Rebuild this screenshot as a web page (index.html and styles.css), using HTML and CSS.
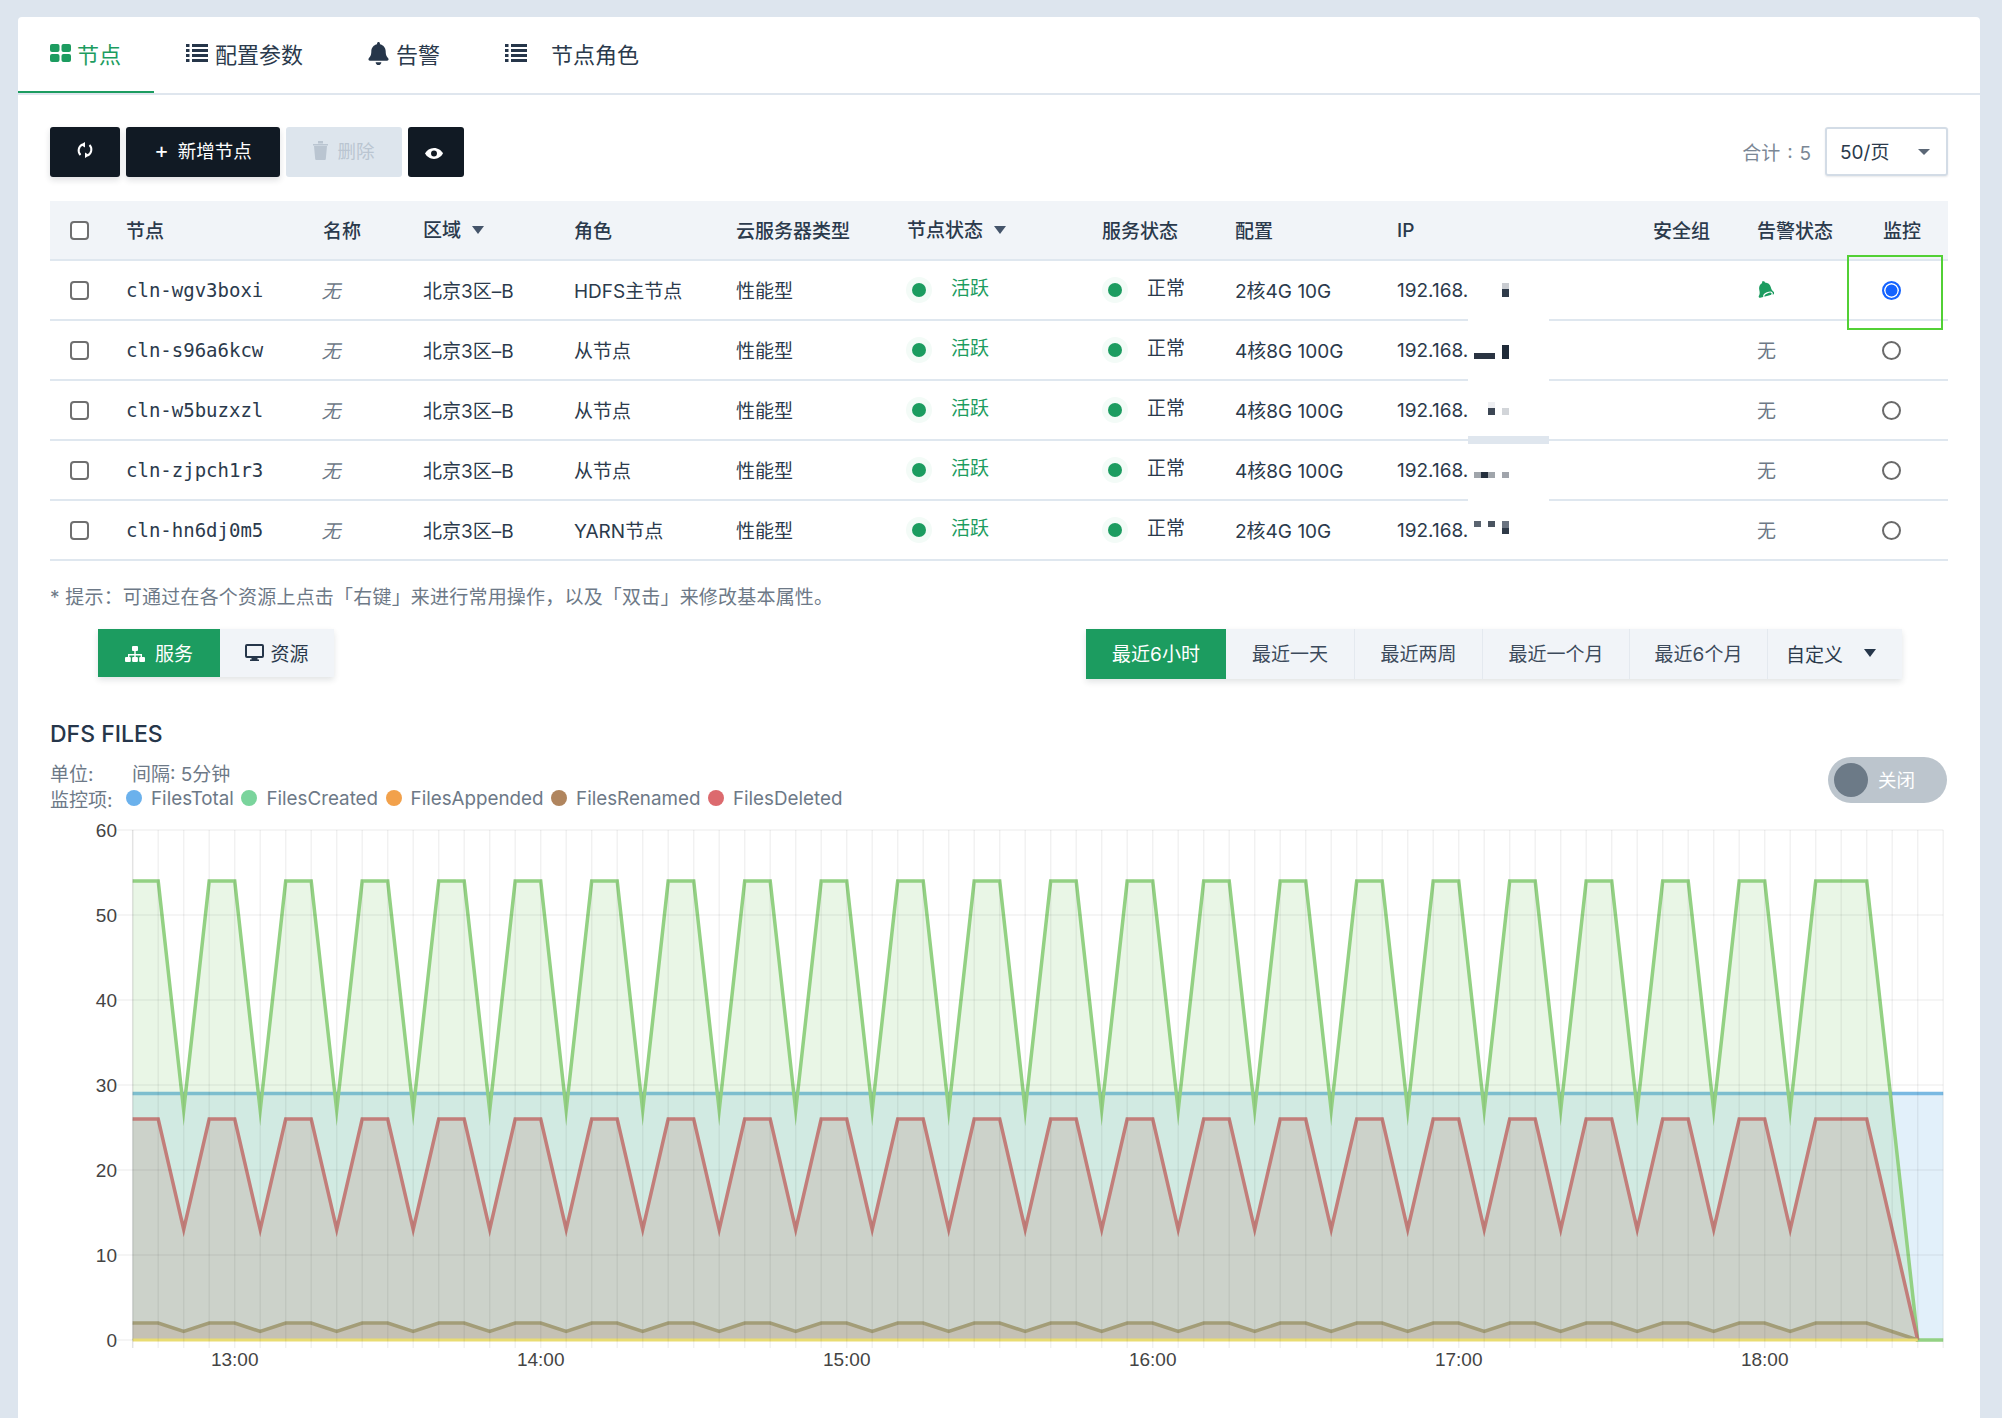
FILE: index.html
```html
<!DOCTYPE html>
<html lang="zh-CN">
<head>
<meta charset="utf-8">
<title>节点</title>
<link rel="stylesheet" href="styles.css">
</head>
<body>
<main class="card">
  <nav class="tabs">
    <a class="tab tab-active">
      <svg class="ico-grid" viewBox="0 0 21 18"><rect width="9.5" height="8" rx="2"/><rect x="11.5" width="9.5" height="8" rx="2"/><rect y="10" width="9.5" height="8" rx="2"/><rect x="11.5" y="10" width="9.5" height="8" rx="2"/></svg>
      <span>节点</span>
    </a>
    <a class="tab tab-config">
      <svg class="ico-list" viewBox="0 0 22 18"><path d="M0 0h3.500v3H0zM6 0h16v3H6zM0 5h3.500v3H0zM6 5h16v3H6zM0 10h3.500v3H0zM6 10h16v3H6zM0 15h3.500v3H0zM6 15h16v3H6z"/></svg>
      <span>配置参数</span>
    </a>
    <a class="tab">
      <svg class="ico-bell" viewBox="0 0 448 512"><path d="M224 512c35.32 0 63.97-28.65 63.97-64H160.03c0 35.35 28.65 64 63.97 64zm215.39-149.71c-19.32-20.76-55.47-51.99-55.47-154.29 0-77.7-54.48-139.9-127.94-155.16V32c0-17.67-14.32-32-31.98-32s-31.98 14.33-31.98 32v20.84C118.56 68.1 64.08 130.3 64.08 208c0 102.3-36.15 133.53-55.47 154.29-6 6.45-8.66 14.16-8.61 21.71.11 16.4 12.98 32 32.1 32h383.8c19.12 0 32-15.6 32.1-32 .05-7.55-2.61-15.27-8.61-21.71z"/></svg>
      <span>告警</span>
    </a>
    <a class="tab tab-wide">
      <svg class="ico-list" viewBox="0 0 22 18"><path d="M0 0h3.500v3H0zM6 0h16v3H6zM0 5h3.500v3H0zM6 5h16v3H6zM0 10h3.500v3H0zM6 10h16v3H6zM0 15h3.500v3H0zM6 15h16v3H6z"/></svg>
      <span>节点角色</span>
    </a>
  </nav>

  <div class="content">
    <div class="toolbar">
      <div class="btn-group">
        <button class="btn btn-icon btn-refresh">
          <svg class="ico-sync" viewBox="0 0 16 16" fill="none" stroke="#fff" stroke-width="2"><path d="M5.500 2.500A6.500 6.500 0 0 0 3.500 13"/><path d="M10.500 13.500A6.500 6.500 0 0 0 12.500 3"/><path d="M8 0v5.500L3.500 2.800zM8 16v-5.500l4.500 2.700z" fill="#fff" stroke="none"/></svg>
        </button>
        <button class="btn btn-new"><span class="plus">+</span>新增节点</button>
        <button class="btn btn-off">
          <svg class="ico-trash" viewBox="0 0 15 19"><path d="M1 5h13l-1.200 13a1 1 0 0 1-1 1H3.200a1 1 0 0 1-1-1zM0 3h15v1.500H0zM5 0h5v2.500H5z"/></svg>
          删除
        </button>
        <button class="btn btn-eye">
          <svg class="ico-eye" viewBox="0 0 20 12"><path d="M10 0C5.500 0 2 2.600 0 6c2 3.400 5.500 6 10 6s8-2.600 10-6c-2-3.400-5.500-6-10-6z" fill="#fff"/><circle cx="10" cy="6" r="3.300" fill="#111a24"/></svg>
        </button>
      </div>
      <div class="pager">
        <span class="total">合计 : 5</span>
        <div class="select"><span>50/页</span><i class="caret-select"></i></div>
      </div>
    </div>

    <div class="table-wrap">
      <table class="nodes">
        <colgroup>
          <col class="c1"><col class="c2"><col class="c3"><col class="c4"><col class="c5"><col class="c6"><col class="c7"><col class="c8"><col class="c9"><col class="c10"><col class="c11"><col class="c12"><col class="c13">
        </colgroup>
        <thead>
          <tr>
            <th><i class="check"></i></th>
            <th>节点</th>
            <th>名称</th>
            <th><span class="sort">区域<i class="caret"></i></span></th>
            <th>角色</th>
            <th>云服务器类型</th>
            <th><span class="sort">节点状态<i class="caret"></i></span></th>
            <th>服务状态</th>
            <th>配置</th>
            <th>IP</th>
            <th>安全组</th>
            <th>告警状态</th>
            <th>监控</th>
          </tr>
        </thead>
        <tbody>
          <tr>
            <td><i class="check"></i></td><td class="mono">cln-wgv3boxi</td><td class="none">无</td><td>北京3区–B</td><td>HDFS主节点</td><td>性能型</td>
            <td><span class="status green"><i class="dot"></i>活跃</span></td><td><span class="status svc"><i class="dot"></i>正常</span></td><td>2核4G 10G</td><td>192.168.</td><td></td>
            <td><svg class="ico-alert" viewBox="0 0 17 18"><g transform="rotate(-14 8 9)"><path d="M8 0c1.200 0 1.800.7 1.800 1.600C12.800 2.400 14.300 4.800 14.300 7.500c0 3.600 1.200 5 2 5.800.6.900 0 2-1 2H1.500c-1 0-1.600-1.100-1-2 .8-.8 2-2.200 2-5.800 0-2.700 1.500-5.100 4.500-5.900C7 .7 6.800 0 8 0z"/></g><ellipse cx="11" cy="14" rx="4.500" ry="2.300" fill="none" stroke="#fff" stroke-width="1.200" transform="rotate(-25 11 14)"/></svg></td>
            <td><i class="radio radio-on"></i></td>
          </tr>
          <tr>
            <td><i class="check"></i></td><td class="mono">cln-s96a6kcw</td><td class="none">无</td><td>北京3区–B</td><td>从节点</td><td>性能型</td>
            <td><span class="status green"><i class="dot"></i>活跃</span></td><td><span class="status svc"><i class="dot"></i>正常</span></td><td>4核8G 100G</td><td>192.168.</td><td></td>
            <td class="muted">无</td><td><i class="radio"></i></td>
          </tr>
          <tr>
            <td><i class="check"></i></td><td class="mono">cln-w5buzxzl</td><td class="none">无</td><td>北京3区–B</td><td>从节点</td><td>性能型</td>
            <td><span class="status green"><i class="dot"></i>活跃</span></td><td><span class="status svc"><i class="dot"></i>正常</span></td><td>4核8G 100G</td><td>192.168.</td><td></td>
            <td class="muted">无</td><td><i class="radio"></i></td>
          </tr>
          <tr>
            <td><i class="check"></i></td><td class="mono">cln-zjpch1r3</td><td class="none">无</td><td>北京3区–B</td><td>从节点</td><td>性能型</td>
            <td><span class="status green"><i class="dot"></i>活跃</span></td><td><span class="status svc"><i class="dot"></i>正常</span></td><td>4核8G 100G</td><td>192.168.</td><td></td>
            <td class="muted">无</td><td><i class="radio"></i></td>
          </tr>
          <tr>
            <td><i class="check"></i></td><td class="mono">cln-hn6dj0m5</td><td class="none">无</td><td>北京3区–B</td><td>YARN节点</td><td>性能型</td>
            <td><span class="status green"><i class="dot"></i>活跃</span></td><td><span class="status svc"><i class="dot"></i>正常</span></td><td>2核4G 10G</td><td>192.168.</td><td></td>
            <td class="muted">无</td><td><i class="radio"></i></td>
          </tr>
        </tbody>
      </table>
      <svg class="mask" viewBox="0 0 81 300">
        <rect x="0" y="0" width="81" height="245" fill="#fff"/>
        <rect x="0" y="175" width="81" height="8" fill="#dfe6ee"/>
        <rect x="34" y="22" width="7" height="6" fill="#c9ccd1"/><rect x="34" y="28" width="7" height="8" fill="#2f3b4a"/>
        <rect x="6" y="92" width="21" height="6" fill="#2a3442"/><rect x="34" y="84" width="7" height="14" fill="#1f2a38"/>
        <rect x="20" y="141" width="7" height="6" fill="#eeeff2"/><rect x="20" y="147" width="7" height="7" fill="#3c4654"/><rect x="34" y="147" width="7" height="7" fill="#d2d5d9"/>
        <rect x="6" y="211" width="21" height="6" fill="#a0a5ab"/><rect x="13" y="211" width="7" height="6" fill="#232e3c"/><rect x="34" y="211" width="7" height="6" fill="#a0a4ab"/>
        <rect x="6" y="260" width="7" height="6" fill="#5a6470"/><rect x="20" y="260" width="7" height="6" fill="#4a5460"/><rect x="34" y="260" width="7" height="7" fill="#6a7380"/><rect x="34" y="267" width="7" height="6" fill="#2f3a48"/>
      </svg>
      <div class="highlight"></div>
    </div>

    <p class="hint">* 提示：可通过在各个资源上点击「右键」来进行常用操作，以及「双击」来修改基本属性。</p>

    <div class="filters">
      <div class="seg seg-kind">
        <a class="seg-item seg-service seg-on">
          <svg class="ico-sitemap" viewBox="0 0 20 16" fill="#fff"><rect x="7" y="0" width="6" height="5" rx="1"/><rect x="9.300" y="5" width="1.400" height="3"/><path d="M3 8h14v3h-1.400V9.400H4.400V11H3z"/><rect x="0" y="11" width="5.800" height="5" rx="1"/><rect x="7.100" y="11" width="5.800" height="5" rx="1"/><rect x="14.200" y="11" width="5.800" height="5" rx="1"/><rect x="9.300" y="9" width="1.400" height="2"/></svg>
          服务
        </a>
        <a class="seg-item seg-res">
          <svg class="ico-monitor" viewBox="0 0 19 17" fill="#26364a"><path d="M2 0h15a2 2 0 0 1 2 2v10a2 2 0 0 1-2 2h-4.500v1.500H14V17H5v-1.500h1.500V14H2a2 2 0 0 1-2-2V2a2 2 0 0 1 2-2zm0 2v10h15V2z"/></svg>
          资源
        </a>
      </div>
      <div class="seg seg-time">
        <a class="seg-item t1 seg-on">最近6小时</a>
        <a class="seg-item t2">最近一天</a>
        <a class="seg-item t3">最近两周</a>
        <a class="seg-item t4">最近一个月</a>
        <a class="seg-item t5">最近6个月</a>
        <a class="seg-item t6"><span class="custom">自定义</span><i class="caret caret-dark"></i></a>
      </div>
    </div>

    <h2 class="chart-title">DFS FILES</h2>
    <div class="chart-head">
      <div class="meta">
        <div class="meta-line"><span class="unit">单位:</span><span>间隔: 5分钟</span></div>
        <div class="meta-line legend">
          <span class="legend-label">监控项:</span>
          <span class="lg"><i class="lg-dot d-blue"></i>FilesTotal</span>
          <span class="lg"><i class="lg-dot d-green"></i>FilesCreated</span>
          <span class="lg"><i class="lg-dot d-orange"></i>FilesAppended</span>
          <span class="lg"><i class="lg-dot d-brown"></i>FilesRenamed</span>
          <span class="lg"><i class="lg-dot d-red"></i>FilesDeleted</span>
        </div>
      </div>
      <div class="toggle"><i class="knob"></i><span>关闭</span></div>
    </div>

    <svg class="chart" viewBox="50 815 1898 560">
      <path class="f-blue" d="M132.700 1093.500H1943.200V1340H132.700z"/>
      <path class="l-blue" d="M132.700 1093.500H1943.200"/>
      <path class="f-green" d="M132.700 881
        h25.500l25.500 229.500l25.500-229.500h25.500l25.500 229.500l25.500-229.500h25.500l25.500 229.500l25.500-229.500h25.500l25.500 229.500l25.500-229.500h25.500l25.500 229.500l25.500-229.500
        h25.500l25.500 229.500l25.500-229.500h25.500l25.500 229.500l25.500-229.500h25.500l25.500 229.500l25.500-229.500h25.500l25.500 229.500l25.500-229.500h25.500l25.500 229.500l25.500-229.500
        h25.500l25.500 229.500l25.500-229.500h25.500l25.500 229.500l25.500-229.500h25.500l25.500 229.500l25.500-229.500h25.500l25.500 229.500l25.500-229.500h25.500l25.500 229.500l25.500-229.500
        h25.500l25.500 229.500l25.500-229.500h25.500l25.500 229.500l25.500-229.500h25.500l25.500 229.500l25.500-229.500h25.500l25.500 229.500l25.500-229.500h25.500l25.500 229.500l25.500-229.500
        h25.500l25.500 229.500l25.500-229.500h25.500l25.500 229.500l25.500-229.500
        h51l51 459H132.700z"/>
      <path class="l-green" d="M132.700 881
        h25.500l25.500 229.500l25.500-229.500h25.500l25.500 229.500l25.500-229.500h25.500l25.500 229.500l25.500-229.500h25.500l25.500 229.500l25.500-229.500h25.500l25.500 229.500l25.500-229.500
        h25.500l25.500 229.500l25.500-229.500h25.500l25.500 229.500l25.500-229.500h25.500l25.500 229.500l25.500-229.500h25.500l25.500 229.500l25.500-229.500h25.500l25.500 229.500l25.500-229.500
        h25.500l25.500 229.500l25.500-229.500h25.500l25.500 229.500l25.500-229.500h25.500l25.500 229.500l25.500-229.500h25.500l25.500 229.500l25.500-229.500h25.500l25.500 229.500l25.500-229.500
        h25.500l25.500 229.500l25.500-229.500h25.500l25.500 229.500l25.500-229.500h25.500l25.500 229.500l25.500-229.500h25.500l25.500 229.500l25.500-229.500h25.500l25.500 229.500l25.500-229.500
        h25.500l25.500 229.500l25.500-229.500h25.500l25.500 229.500l25.500-229.500
        h51l51 459h25.500"/>
      <path class="f-brown" d="M132.700 1323
        h25.500l25.500 8.500l25.500-8.500h25.500l25.500 8.500l25.500-8.500h25.500l25.500 8.500l25.500-8.500h25.500l25.500 8.500l25.500-8.500h25.500l25.500 8.500l25.500-8.500
        h25.500l25.500 8.500l25.500-8.500h25.500l25.500 8.500l25.500-8.500h25.500l25.500 8.500l25.500-8.500h25.500l25.500 8.500l25.500-8.500h25.500l25.500 8.500l25.500-8.500
        h25.500l25.500 8.500l25.500-8.500h25.500l25.500 8.500l25.500-8.500h25.500l25.500 8.500l25.500-8.500h25.500l25.500 8.500l25.500-8.500h25.500l25.500 8.500l25.500-8.500
        h25.500l25.500 8.500l25.500-8.500h25.500l25.500 8.500l25.500-8.500h25.500l25.500 8.500l25.500-8.500h25.500l25.500 8.500l25.500-8.500h25.500l25.500 8.500l25.500-8.500
        h25.500l25.500 8.500l25.500-8.500h25.500l25.500 8.500l25.500-8.500
        h51l51 17H132.700z"/>
      <path class="f-red" d="M132.700 1119
        h25.500l25.500 110.500l25.500-110.500h25.500l25.500 110.500l25.500-110.500h25.500l25.500 110.500l25.500-110.500h25.500l25.500 110.500l25.500-110.500h25.500l25.500 110.500l25.500-110.500
        h25.500l25.500 110.500l25.500-110.500h25.500l25.500 110.500l25.500-110.500h25.500l25.500 110.500l25.500-110.500h25.500l25.500 110.500l25.500-110.500h25.500l25.500 110.500l25.500-110.500
        h25.500l25.500 110.500l25.500-110.500h25.500l25.500 110.500l25.500-110.500h25.500l25.500 110.500l25.500-110.500h25.500l25.500 110.500l25.500-110.500h25.500l25.500 110.500l25.500-110.500
        h25.500l25.500 110.500l25.500-110.500h25.500l25.500 110.500l25.500-110.500h25.500l25.500 110.500l25.500-110.500h25.500l25.500 110.500l25.500-110.500h25.500l25.500 110.500l25.500-110.500
        h25.500l25.500 110.500l25.500-110.500h25.500l25.500 110.500l25.500-110.500
        h51l51 221H132.700z"/>
      <path class="l-red" d="M132.700 1119
        h25.500l25.500 110.500l25.500-110.500h25.500l25.500 110.500l25.500-110.500h25.500l25.500 110.500l25.500-110.500h25.500l25.500 110.500l25.500-110.500h25.500l25.500 110.500l25.500-110.500
        h25.500l25.500 110.500l25.500-110.500h25.500l25.500 110.500l25.500-110.500h25.500l25.500 110.500l25.500-110.500h25.500l25.500 110.500l25.500-110.500h25.500l25.500 110.500l25.500-110.500
        h25.500l25.500 110.500l25.500-110.500h25.500l25.500 110.500l25.500-110.500h25.500l25.500 110.500l25.500-110.500h25.500l25.500 110.500l25.500-110.500h25.500l25.500 110.500l25.500-110.500
        h25.500l25.500 110.500l25.500-110.500h25.500l25.500 110.500l25.500-110.500h25.500l25.500 110.500l25.500-110.500h25.500l25.500 110.500l25.500-110.500h25.500l25.500 110.500l25.500-110.500
        h25.500l25.500 110.500l25.500-110.500h25.500l25.500 110.500l25.500-110.500
        h51l51 221"/>
      <path class="l-brown" d="M132.700 1323
        h25.500l25.500 8.500l25.500-8.500h25.500l25.500 8.500l25.500-8.500h25.500l25.500 8.500l25.500-8.500h25.500l25.500 8.500l25.500-8.500h25.500l25.500 8.500l25.500-8.500
        h25.500l25.500 8.500l25.500-8.500h25.500l25.500 8.500l25.500-8.500h25.500l25.500 8.500l25.500-8.500h25.500l25.500 8.500l25.500-8.500h25.500l25.500 8.500l25.500-8.500
        h25.500l25.500 8.500l25.500-8.500h25.500l25.500 8.500l25.500-8.500h25.500l25.500 8.500l25.500-8.500h25.500l25.500 8.500l25.500-8.500h25.500l25.500 8.500l25.500-8.500
        h25.500l25.500 8.500l25.500-8.500h25.500l25.500 8.500l25.500-8.500h25.500l25.500 8.500l25.500-8.500h25.500l25.500 8.500l25.500-8.500h25.500l25.500 8.500l25.500-8.500
        h25.500l25.500 8.500l25.500-8.500h25.500l25.500 8.500l25.500-8.500
        h51l51 17"/>
      <path class="l-yellow" d="M132.700 1340H1918"/>

      <path class="grid-h" d="M117 830H1943.200M117 915H1943.200M117 1000H1943.200M117 1085H1943.200M117 1170H1943.200M117 1255H1943.200M117 1340H133"/>
      <path class="grid-v" d="M158.200 830V1348M183.700 830V1348M209.200 830V1348M234.700 830V1348M260.200 830V1348M285.700 830V1348M311.200 830V1348M336.700 830V1348M362.200 830V1348M387.700 830V1348M413.200 830V1348M438.700 830V1348M464.200 830V1348M489.700 830V1348M515.200 830V1348M540.700 830V1348M566.200 830V1348M591.700 830V1348M617.200 830V1348M642.700 830V1348M668.200 830V1348M693.700 830V1348M719.200 830V1348M744.700 830V1348M770.200 830V1348M795.700 830V1348M821.200 830V1348M846.700 830V1348M872.200 830V1348M897.700 830V1348M923.200 830V1348M948.700 830V1348M974.200 830V1348M999.700 830V1348M1025.200 830V1348M1050.700 830V1348M1076.200 830V1348M1101.700 830V1348M1127.200 830V1348M1152.700 830V1348M1178.200 830V1348M1203.700 830V1348M1229.200 830V1348M1254.700 830V1348M1280.200 830V1348M1305.700 830V1348M1331.200 830V1348M1356.700 830V1348M1382.200 830V1348M1407.700 830V1348M1433.200 830V1348M1458.700 830V1348M1484.200 830V1348M1509.700 830V1348M1535.200 830V1348M1560.700 830V1348M1586.200 830V1348M1611.700 830V1348M1637.200 830V1348M1662.700 830V1348M1688.200 830V1348M1713.700 830V1348M1739.200 830V1348M1764.700 830V1348M1790.200 830V1348M1815.700 830V1348M1841.200 830V1348M1866.700 830V1348M1892.200 830V1348M1917.700 830V1348M1943.200 830V1348"/>
      <path class="axis" d="M132.700 830V1348"/>

      <g class="y-labels">
        <text x="117" y="837">60</text><text x="117" y="922">50</text><text x="117" y="1007">40</text><text x="117" y="1092">30</text><text x="117" y="1177">20</text><text x="117" y="1262">10</text><text x="117" y="1347">0</text>
      </g>
      <g class="x-labels">
        <text x="234.700" y="1366">13:00</text><text x="540.700" y="1366">14:00</text><text x="846.700" y="1366">15:00</text><text x="1152.700" y="1366">16:00</text><text x="1458.700" y="1366">17:00</text><text x="1764.700" y="1366">18:00</text>
      </g>
    </svg>
  </div>
</main>
</body>
</html>
```

FILE: styles.css
```css
* { box-sizing: border-box; }
html, body { margin: 0; height: 100%; }
body {
  height: 1418px;
  overflow: hidden;
  padding: 17px 22px 0 18px;
  background: #dde5ee;
  color: #2b3a4c;
  font-family: Inter, "Noto Sans CJK SC", sans-serif;
  font-size: 19px;
}
i { display: inline-block; font-style: normal; }
svg { display: block; }

.card { height: 1401px; background: #fff; border-radius: 4px 4px 0 0; }

/* tabs */
.tabs { display: flex; height: 78px; border-bottom: 2px solid #dfe6ee; }
.tab {
  display: flex; align-items: center; height: 76px; padding: 0 33px 2px 31px; gap: 7px;
  font-size: 22px; color: #2b3a4c; border-bottom: 2px solid transparent;
}
.tab-active { width: 136px; padding-left: 32px; gap: 6px; color: #1c9c60; border-bottom-color: #1c9c60; }
.tab-config { padding-left: 32px; padding-right: 34px; }
.tab-wide { padding-left: 32px; gap: 24px; }
.ico-grid { width: 21px; height: 18px; fill: #1c9c60; }
.ico-list { width: 22px; height: 18px; fill: #26364a; }
.ico-bell { width: 21px; height: 23px; fill: #26364a; }

.content { padding: 0 32px; }

/* toolbar */
.toolbar { display: flex; justify-content: space-between; padding-top: 32px; }
.btn-group { display: flex; gap: 6px; }
.btn {
  display: flex; align-items: center; justify-content: center; height: 50px; padding: 0 0 4px;
  border: 0; border-radius: 3px; background: #111a24; color: #fff;
  font-family: inherit; font-size: 18.500px;
  box-shadow: 0 3px 6px rgba(20, 30, 45, .14);
}
.btn-refresh { width: 70px; }
.ico-sync { width: 16px; height: 16px; }
.btn-new { width: 154px; }
.plus { margin-right: 9px; font-size: 22px; line-height: 1; }
.btn-off { width: 116px; gap: 9px; background: #dde5ed; color: #bac5d1; box-shadow: none; }
.ico-trash { width: 15px; height: 19px; fill: #bac5d1; }
.btn-eye { width: 56px; padding: 2px 4px 0 0; box-shadow: none; }
.ico-eye { width: 18px; height: 11px; }
.pager { display: flex; align-items: flex-start; gap: 14px; }
.total { align-self: center; padding-bottom: 2px; color: #7b8795; word-spacing: 1.500px; }
.select {
  display: flex; align-items: center; justify-content: space-between;
  width: 123px; height: 49px; padding: 0 16px 2px 13px;
  border: 2px solid #d3dce6; border-radius: 3px;
  box-shadow: 0 1px 2px rgba(20, 30, 45, .1);
}
.caret-select { width: 0; height: 0; border: 6px solid transparent; border-top: 6px solid #5b6776; border-bottom: 0; margin-top: 2px; }

/* table */
.table-wrap { position: relative; margin-top: 24px; }
.nodes { width: 1898px; table-layout: fixed; border-collapse: separate; border-spacing: 0; }
.c1 { width: 76px; } .c2 { width: 197px; } .c3 { width: 100px; } .c4 { width: 151px; }
.c5 { width: 162px; } .c6 { width: 171px; } .c7 { width: 195px; } .c8 { width: 133px; }
.c9 { width: 162px; } .c10 { width: 256px; } .c11 { width: 104px; } .c12 { width: 126px; } .c13 { width: 65px; }
.nodes th, .nodes td {
  height: 60px; padding: 0 0 2px; text-align: left; white-space: nowrap;
  border-bottom: 2px solid #dfe7ef;
}
.nodes th { background: #f1f4f8; font-weight: 500; color: #2b3a4c; }
.nodes th:first-child, .nodes td:first-child { padding: 0 0 0 20px; }
.nodes th:nth-child(10), .nodes td:nth-child(2), .nodes td:nth-child(10), .nodes td:nth-child(13) { padding-bottom: 0; }
.check {
  display: block; width: 19px; height: 19px;
  border: 2px solid #6f6f6f; border-radius: 4px; background: #fff;
}
.mono { font-family: "DejaVu Sans Mono", monospace; font-size: 19px; }
.none { color: #6d7987; font-style: italic; text-indent: -1.500px; }
.muted { color: #6d7987; }
.sort { display: inline-flex; align-items: center; gap: 11px; padding-bottom: 2px; }
.caret { width: 0; height: 0; border: 6px solid transparent; border-top: 8px solid #44546a; border-bottom: 0; margin-top: 4px; }
.status { display: inline-flex; align-items: center; gap: 25px; line-height: 26px; }
.dot {
  width: 14px; height: 14px; margin: 2px 0 0 5px; border-radius: 50%; background: #1c9c60;
  box-shadow: 0 0 0 6px #f3fbf7;
}
.svc .dot { margin-left: 6px; }
.green { color: #1c9c60; }
.ico-alert { width: 17px; height: 18px; margin-top: 2px; fill: #1c9c60; }
.radio { display: block; width: 19px; height: 19px; margin-left: -1px; border: 2px solid #6a6a6a; border-radius: 50%; background: #fff; }
.radio-on { border-color: #1463ff; box-shadow: inset 0 0 0 1.500px #fff; background: #1463ff; }
.mask { position: absolute; left: 1418px; top: 60px; width: 81px; height: 300px; }
.highlight { position: absolute; left: 1797px; top: 54px; width: 96px; height: 75px; border: 2px solid #52d035; }

.hint { margin: 24px 0 0; line-height: 26px; color: #6d7987; letter-spacing: .2px; }

/* segmented filters */
.filters { display: flex; justify-content: space-between; align-items: flex-start; margin-top: 18px; padding: 0 46px 0 48px; }
.seg { display: flex; background: #f1f4f8; box-shadow: 0 3px 6px rgba(20, 30, 45, .12); }
.seg-item { display: flex; align-items: center; justify-content: center; height: 50px; padding-bottom: 4px; color: #3c4a5b; }
.seg-kind .seg-item { height: 48px; padding-bottom: 2px; gap: 10px; }
.seg-service { width: 122px; }
.seg-res { width: 114px; gap: 6px !important; color: #2b3a4c; }
.seg-on { background: #1c9c60; color: #fff; }
.ico-sitemap { width: 20px; height: 16px; margin-top: 3px; }
.ico-monitor { width: 19px; height: 17px; }
.t1 { width: 140px; }
.t2 { width: 128px; }
.t3 { width: 128px; border-left: 1px solid #e4e9ef; }
.t4 { width: 147px; border-left: 1px solid #e4e9ef; }
.t5 { width: 138px; border-left: 1px solid #e4e9ef; }
.t6 { width: 135px; gap: 21px; padding-right: 8px; border-left: 1px solid #e4e9ef; color: #2b3a4c; }
.custom { padding-top: 3px; }
.caret-dark { border-top-color: #26364a; margin-top: 2px; }

/* chart */
.chart-title { margin: 40px 0 8px; font-size: 23px; font-weight: 500; line-height: 30px; color: #26364a; }
.chart-head { display: flex; justify-content: space-between; padding-right: 1px; }
.meta { padding-top: 2px; color: #6d7987; }
.meta-line { display: flex; align-items: center; height: 26px; }
.unit { width: 82px; }
.legend-label { width: 76px; }
.lg { display: flex; align-items: center; margin-right: 7.500px; font-size: 18.800px; }
.lg-dot { width: 16px; height: 16px; margin-right: 9px; border-radius: 50%; }
.d-blue { background: #6bb1ec; } .d-green { background: #7ad49c; } .d-orange { background: #f2a14b; }
.d-brown { background: #b0855e; } .d-red { background: #dc6a6e; }
.toggle {
  display: flex; align-items: center; gap: 10px; width: 119px; height: 46px; padding: 0 0 2px 6px;
  border-radius: 23px; background: #bcc5cd; color: #fff; font-size: 18.500px;
}
.knob { width: 34px; height: 34px; margin-top: 2px; border-radius: 50%; background: #6c7a87; }

.chart { width: 1898px; height: 560px; margin-top: 4px; overflow: visible; }
.chart path { fill: none; stroke-linejoin: miter; stroke-miterlimit: 10; }
.chart .f-blue { fill: rgba(108, 178, 232, .2); }
.chart .f-green { fill: rgba(147, 209, 131, .2); }
.chart .f-brown { fill: rgba(169, 131, 95, .2); }
.chart .f-red { fill: rgba(185, 114, 110, .2); }
.l-blue { stroke: #79b9e2; stroke-width: 3.500; }
.l-green { stroke: #93d183; stroke-width: 3.500; }
.l-red { stroke: #c27e7a; stroke-width: 3.500; }
.l-brown { stroke: #a39d78; stroke-width: 3.500; }
.l-yellow { stroke: #e9dc72; stroke-width: 3; }
.grid-h, .grid-v { stroke: rgba(0, 0, 0, .055); stroke-width: 1.500; }
.axis { stroke: rgba(0, 0, 0, .11); stroke-width: 1.500; }
.y-labels text { font: 19px "Liberation Sans", sans-serif; fill: #444; text-anchor: end; }
.x-labels text { font: 19px "Liberation Sans", sans-serif; fill: #444; text-anchor: middle; }
```
